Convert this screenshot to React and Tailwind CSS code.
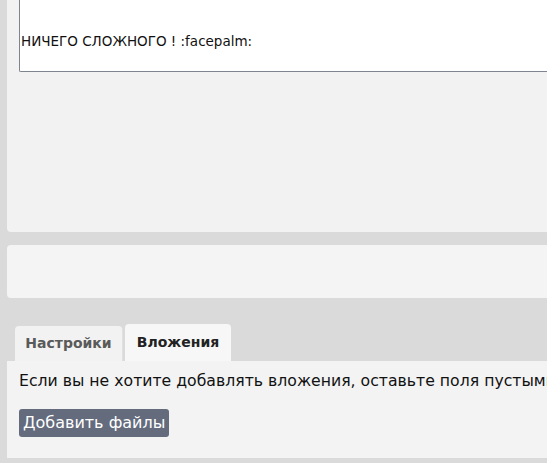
import React from 'react';

const tabs = [
  { label: 'Настройки', active: false },
  { label: 'Вложения', active: true }
];

export default function App() {
  return (
    <div className="h-[463px] w-[547px] overflow-hidden bg-[#dadada] pl-[7px] font-['DejaVu_Sans',sans-serif]">
      <div className="h-[232px] rounded-bl-[4px] bg-[#f2f2f2] pl-[12px]">
        <div className="h-[72px] rounded-bl-[2px] border-b border-l border-[#7f8590] bg-white pl-[1px] pt-[32px] text-[13.5px] leading-[18px] text-[#111]">
          НИЧЕГО СЛОЖНОГО ! :facepalm:
        </div>
      </div>

      <div className="mt-[13px] h-[53px] rounded-l-[4px] bg-[#f4f4f4]" />

      <div className="mt-[26px] flex items-end gap-[2px] pl-[8px]">
        {tabs.map((tab) => (
          <div
            key={tab.label}
            className={
              tab.active
                ? 'flex h-[37px] w-[106px] items-center justify-center rounded-t-[4px] bg-[#f7f7f7] text-[14px] font-bold text-[#222]'
                : 'flex h-[35px] w-[108px] items-center justify-center rounded-t-[4px] border-r border-[#e0e0e0] bg-[#f2f2f2] text-[14px] font-bold text-[#5a5a5a]'
            }
          >
            {tab.label}
          </div>
        ))}
      </div>

      <div className="h-[97px] bg-[#f3f3f3] pl-[12px] pt-[9px]">
        <p className="whitespace-nowrap text-[15.7px] leading-[22px] text-[#111]">
          Если вы не хотите добавлять вложения, оставьте поля пустыми
        </p>
        <button className="mt-[17px] h-[28px] rounded-[3px] bg-[#636b7d] px-[4px] text-[16px] leading-[28px] text-white">
          Добавить файлы
        </button>
      </div>
    </div>
  );
}
